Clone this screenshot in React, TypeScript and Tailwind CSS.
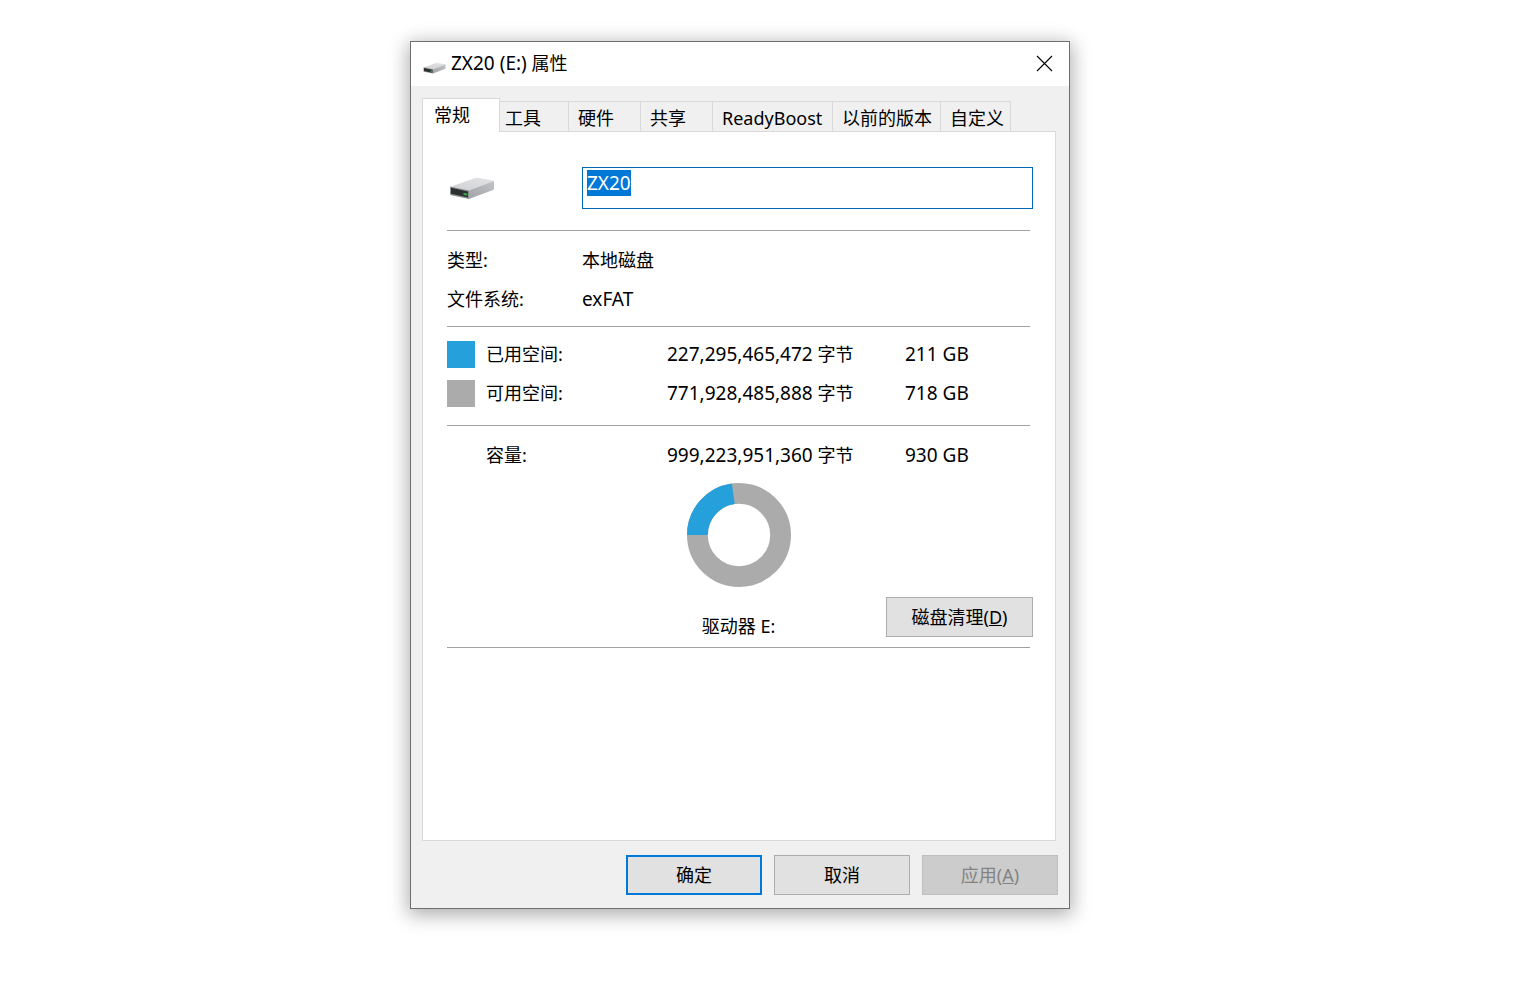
import { useEffect, useRef } from "react";
import type { ReactNode } from "react";

const USED_BYTES = 227295465472;
const TOTAL_BYTES = 999223951360;

function DriveIcon({ className }: { className: string }) {
  return (
    <svg viewBox="0 0 46 24" className={className} aria-hidden="true">
      <defs>
        <linearGradient id="driveTop" x1="0" y1="1" x2="1" y2="0">
          <stop offset="0" stopColor="#cfd0d2" />
          <stop offset="1" stopColor="#e4e4e6" />
        </linearGradient>
        <linearGradient id="driveSide" x1="0" y1="1" x2="1" y2="0">
          <stop offset="0" stopColor="#a3a4a7" />
          <stop offset="1" stopColor="#c2c3c6" />
        </linearGradient>
      </defs>
      <path d="M1 11 L26 2 Q27.5 1.500 29 1.800 L44 4.500 Q45 4.800 45 5.500 L20 15 Z" fill="url(#driveTop)" />
      <path d="M20 14.500 L45 5 L45 12.500 Q45 13.500 44 14 L20 23 Z" fill="url(#driveSide)" />
      <path d="M1 10.500 L20 14.500 L20 23 L2 19.300 Q1 19 1 18 Z" fill="#8e9094" />
      <path d="M2 11.800 L19 15.400 L19 21.400 L2 17.800 Z" fill="#2c302f" />
      <path d="M14.500 16.800 L18.400 17.600 L18.400 19.800 L14.500 19 Z" fill="#35a548" />
    </svg>
  );
}

function UsageRing() {
  const radius = 42;
  const length = 2 * Math.PI * radius;
  const used = (USED_BYTES / TOTAL_BYTES) * length;
  return (
    <svg viewBox="0 0 105 105" className="size-[104px]" role="img" aria-label="磁盘使用情况">
      <circle cx="52.5" cy="52.5" r={radius} fill="none" stroke="#ababab" strokeWidth="21" />
      <circle
        cx="52.5"
        cy="52.5"
        r={radius}
        fill="none"
        stroke="#26a0da"
        strokeWidth="21"
        strokeDasharray={`${used} ${length}`}
        transform="rotate(180 52.5 52.5)"
      />
    </svg>
  );
}

function Divider({ className }: { className: string }) {
  return <hr className={`border-0 border-t border-[#a0a0a0] ${className}`} />;
}

function Tab({ children, className }: { children: ReactNode; className: string }) {
  return (
    <button
      type="button"
      role="tab"
      aria-selected="false"
      className={`h-[30px] border-t border-r border-[#d9d9d9] bg-[#f0f0f0] pt-[2px] pl-[9px] text-left leading-6 whitespace-nowrap ${className}`}
    >
      {children}
    </button>
  );
}

function Bytes({ value }: { value: string }) {
  return (
    <>
      <span className="text-[19px]">{value}</span> 字节
    </>
  );
}

export default function App() {
  const nameRef = useRef<HTMLInputElement>(null);

  useEffect(() => {
    nameRef.current?.focus();
    nameRef.current?.select();
  }, []);

  return (
    <main className="min-h-screen bg-white pt-[41px] pr-[46px] pb-16 font-['Noto_Sans','Noto_Sans_CJK_SC',sans-serif] text-[18px] leading-6 text-black">
      <section
        aria-label="ZX20 (E:) 属性"
        className="mx-auto w-full max-w-[660px] border border-[#6e6e6e] bg-[#f0f0f0] shadow-[0_4px_18px_2px_rgba(0,0,0,0.32)]"
      >
        <header className="flex h-11 items-center bg-white pr-4 pb-[2px] pl-3">
          <DriveIcon className="mt-[10px] w-[23px]" />
          <h1 className="ml-[5px] flex-1">
            <span className="text-[19px]">ZX20 (E:)</span> 属性
          </h1>
          <button type="button" aria-label="关闭">
            <svg viewBox="0 0 17 17" className="size-[17px]" fill="none" stroke="#000" strokeWidth="1.1">
              <path d="M1 1 L16 16 M16 1 L1 16" />
            </svg>
          </button>
        </header>

        <div className="pt-3 pr-[13px] pl-[11px]">
          <div role="tablist" className="flex items-end">
            <button
              type="button"
              role="tab"
              aria-selected="true"
              className="relative z-10 -mb-px h-[34px] w-[78px] border border-b-0 border-[#d9d9d9] bg-white pb-[2px] pl-[11px] text-left leading-6"
            >
              常规
            </button>
            <Tab className="-ml-1 w-[73px]">工具</Tab>
            <Tab className="w-[72px]">硬件</Tab>
            <Tab className="w-[72px]">共享</Tab>
            <Tab className="w-[120px]">ReadyBoost</Tab>
            <Tab className="w-[108px]">以前的版本</Tab>
            <Tab className="w-[70px]">自定义</Tab>
          </div>

          <div role="tabpanel" className="min-h-[710px] border border-[#d9d9d9] bg-white pt-[35px] pr-[25px] pl-6">
            <div className="-mr-[3px] flex items-center">
              <div className="w-[135px] shrink-0 pl-[2px]">
                <DriveIcon className="w-[46px]" />
              </div>
              <input
                ref={nameRef}
                type="text"
                aria-label="卷标"
                defaultValue="ZX20"
                className="h-[42px] min-w-0 flex-1 border border-[#0067b8] bg-white pt-[3px] pb-[13px] pl-1 text-[19px] leading-6 caret-transparent outline-none selection:bg-[#0078d7] selection:text-white"
              />
            </div>

            <Divider className="mt-[21px]" />

            <dl className="mt-[10px] grid grid-cols-[135px_1fr] leading-[39px]">
              <dt>类型:</dt>
              <dd>本地磁盘</dd>
              <dt>文件系统:</dt>
              <dd className="text-[19px]">exFAT</dd>
            </dl>

            <Divider className="mt-[7px]" />

            <table className="mt-2 w-full table-fixed text-left">
              <colgroup>
                <col className="w-[39px]" />
                <col className="w-[181px]" />
                <col className="w-[238px]" />
                <col />
              </colgroup>
              <tbody>
                <tr className="h-[39px]">
                  <td>
                    <div className="h-[27px] w-7 bg-[#26a0da]" />
                  </td>
                  <th scope="row" className="pb-[2px] font-normal">已用空间:</th>
                  <td className="pb-[2px]"><Bytes value="227,295,465,472" /></td>
                  <td className="pb-[2px] text-[19px]">211 GB</td>
                </tr>
                <tr className="h-[39px]">
                  <td>
                    <div className="h-[27px] w-7 bg-[#ababab]" />
                  </td>
                  <th scope="row" className="pb-[2px] font-normal">可用空间:</th>
                  <td className="pb-[2px]"><Bytes value="771,928,485,888" /></td>
                  <td className="pb-[2px] text-[19px]">718 GB</td>
                </tr>
                <tr className="h-3 border-b border-[#a0a0a0]">
                  <td colSpan={4} />
                </tr>
                <tr className="h-[58px]">
                  <td />
                  <th scope="row" className="pt-[2px] font-normal">容量:</th>
                  <td className="pt-[2px]"><Bytes value="999,223,951,360" /></td>
                  <td className="pt-[2px] text-[19px]">930 GB</td>
                </tr>
              </tbody>
            </table>

            <div className="grid grid-cols-[1fr_auto_1fr] items-end">
              <figure className="col-start-2 flex flex-col items-center pb-[9px]">
                <UsageRing />
                <figcaption className="mt-[27px]">驱动器 E:</figcaption>
              </figure>
              <button
                type="button"
                className="-mr-[3px] mb-[10px] h-10 w-[147px] justify-self-end border border-[#adadad] bg-[#e1e1e1]"
              >
                磁盘清理(<u>D</u>)
              </button>
            </div>

            <Divider className="" />
          </div>
        </div>

        <footer className="flex justify-end gap-3 pt-[14px] pr-[11px] pb-[13px]">
          <button type="button" className="h-10 w-[136px] border-2 border-[#0078d7] bg-[#e1e1e1]">
            确定
          </button>
          <button type="button" className="h-10 w-[136px] border border-[#adadad] bg-[#e1e1e1]">
            取消
          </button>
          <button
            type="button"
            disabled
            className="h-10 w-[136px] border border-[#bfbfbf] bg-[#cccccc] text-[#838383]"
          >
            应用(<u>A</u>)
          </button>
        </footer>
      </section>
    </main>
  );
}
